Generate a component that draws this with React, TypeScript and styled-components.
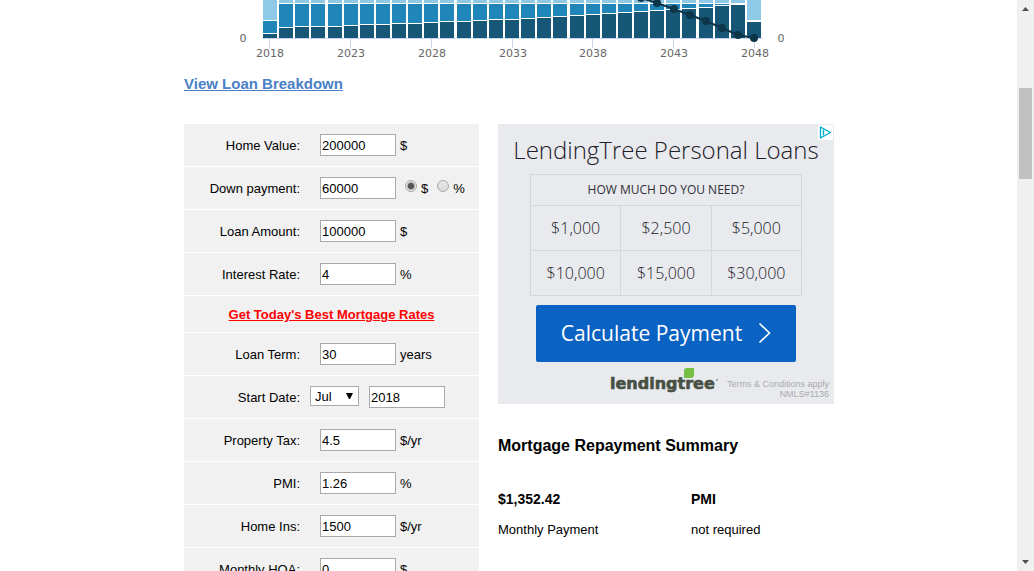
import React from "react";
import styled, { createGlobalStyle } from "styled-components";

const GlobalStyle = createGlobalStyle`
  *, *::before, *::after { box-sizing: border-box; }
  body {
    margin: 0;
    background: #fff;
    color: #000;
    font-family: "Liberation Sans", Arial, sans-serif;
    font-size: 13px;
  }
`;

const Window = styled.div`
  display: grid;
  grid-template-columns: minmax(0, 1fr) 17px;
  height: 100vh;
  overflow: hidden;
`;

const Viewport = styled.div`
  min-width: 0;
  padding-left: 1px;
  overflow: hidden;
`;

const Content = styled.main`
  max-width: 650px;
  margin: 0 auto;
`;

const Chart = styled.svg`
  display: block;
  width: 100%;
  height: 64px;
  overflow: hidden;
  font-family: "DejaVu Sans", Verdana, sans-serif;
  font-size: 11px;
  fill: #666;
`;

const BreakdownLink = styled.a`
  display: block;
  width: fit-content;
  margin: 10px 0 30px;
  color: #4a80c6;
  font-size: 15px;
  font-weight: bold;
  line-height: 20px;
`;

const Columns = styled.div`
  display: grid;
  grid-template-columns: 295px minmax(0, 336px);
  justify-content: space-between;
  align-items: start;
`;

const LoanForm = styled.form`
  display: flex;
  flex-direction: column;
  gap: 1px;
`;

const Row = styled.div`
  display: flex;
  align-items: center;
  height: 42px;
  background: #f1f1f1;
`;

const RowLabel = styled.label<{ $gap?: number }>`
  width: 116px;
  margin-right: ${(p) => p.$gap ?? 20}px;
  padding-top: 2px;
  text-align: right;
  line-height: 20px;
`;

const TextBox = styled.input`
  width: 76px;
  height: 22px;
  padding: 1px;
  border: 1px solid #a9a9a9;
  border-radius: 0;
  background: #fff;
  color: #000;
  font: inherit;
`;

const Unit = styled.span`
  margin-left: 4px;
  padding-top: 2px;
  line-height: 20px;
`;

const RadioLabel = styled.label`
  display: flex;
  align-items: center;
  gap: 4px;
  margin-left: 9px;
  padding-top: 2px;
  line-height: 20px;
`;

const Radio = styled.input`
  appearance: none;
  width: 12px;
  height: 12px;
  margin: 0 0 6px;
  border: 1px solid #a8a8a8;
  border-radius: 50%;
  background: linear-gradient(#e6e6e6, #dcdcdc);
  &:checked {
    background: radial-gradient(circle, #555 0 2px, #666 3px, #e2e2e2 4px);
  }
`;

const SelectWrap = styled.span`
  display: grid;
  align-items: center;
  width: 49px;
  height: 20px;
  margin: 0 10px 2px 0;
`;

const MonthSelect = styled.select`
  grid-area: 1 / 1;
  appearance: none;
  width: 100%;
  height: 20px;
  padding: 0 4px;
  border: 1px solid #a9a9a9;
  border-radius: 0;
  background: #fff;
  color: #000;
  font: inherit;
`;

const SelectArrow = styled.svg`
  grid-area: 1 / 1;
  justify-self: end;
  margin-right: 6px;
  pointer-events: none;
`;

const RatesRow = styled(Row)`
  justify-content: center;
  height: 36px;
`;

const RatesLink = styled.a`
  padding-top: 2px;
  color: #f00;
  font-weight: bold;
  line-height: 20px;
`;

const Ad = styled.aside`
  position: relative;
  display: flex;
  flex-direction: column;
  align-items: center;
  height: 280px;
  padding-top: 9px;
  background: #e9eaee;
  color: #303038;
  font-family: "Open Sans", sans-serif;
`;

const AdChoices = styled.a`
  position: absolute;
  top: 1px;
  right: 1px;
  width: 15px;
  height: 15px;
  background: #fff;
  svg { display: block; }
`;

const AdTitle = styled.h2`
  margin: 0 0 7px;
  color: #202028;
  font-size: 24px;
  font-weight: 300;
  line-height: 34px;
  white-space: nowrap;
`;

const AmountGrid = styled.div`
  display: grid;
  grid-template-columns: repeat(3, 1fr);
  gap: 1px;
  width: 272px;
  padding: 1px;
  background: #d5d7db;
`;

const AmountHead = styled.div`
  grid-column: 1 / -1;
  background: #e9eaee;
  font-size: 12px;
  line-height: 30px;
  text-align: center;
`;

const Amount = styled.button`
  height: 44px;
  padding: 0;
  border: 0;
  background: #e9eaee;
  color: #202028;
  font: 300 16px "Open Sans", sans-serif;
`;

const Calculate = styled.button`
  display: flex;
  align-items: center;
  justify-content: center;
  gap: 16px;
  width: 260px;
  height: 57px;
  margin-top: 9px;
  padding: 0 0 2px;
  border: 0;
  border-radius: 2px;
  background: #0a62c2;
  color: #fff;
  font: 400 21px "Open Sans", sans-serif;
`;

const AdFooter = styled.div`
  display: flex;
  align-self: stretch;
  justify-content: flex-end;
  gap: 6px;
  padding: 5px 5px 0 0;
`;

const Terms = styled.p`
  margin: 12px 0 0;
  color: #aaabae;
  font: 9px/10px "Liberation Sans", Arial, sans-serif;
  text-align: right;
`;

const SummaryTitle = styled.h3`
  margin: 32px 0 33px;
  font-size: 16px;
  line-height: 20px;
`;

const Summary = styled.dl`
  display: grid;
  grid-template-columns: 193px 1fr;
  margin: 0;
`;

const SummaryItem = styled.div`
  display: flex;
  flex-direction: column;
  gap: 11px;
`;

const SummaryValue = styled.dt`
  font-size: 14px;
  font-weight: bold;
  line-height: 20px;
`;

const SummaryLabel = styled.dd`
  margin: 0;
  line-height: 20px;
`;

const Scrollbar = styled.div`
  display: flex;
  flex-direction: column;
  align-items: center;
  background: #f0f0f0;
`;

const ScrollArrow = styled.svg`
  flex: none;
  display: block;
`;

const ScrollTrack = styled.div`
  flex: 1;
  padding-top: 71px;
`;

const ScrollThumb = styled.div`
  width: 13px;
  height: 91px;
  background: #c1c1c1;
`;

const darkTops = [
  34, 28, 27, 27, 27, 26, 25, 25, 24, 24, 23, 22, 22, 21, 20, 20, 19, 18, 17,
  16, 15, 14, 13, 12, 11, 10, 9, 8, 6, 5, 22,
];
const balance = [
  [641, -2], [657, 3], [674, 9], [690, 15], [706, 21], [722, 28], [738, 35], [754, 38],
].map(([x, y]) => [x - 184, y]);

function BalanceChart() {
  const last = darkTops.length - 1;
  return (
    <Chart viewBox="0 0 650 64" role="img" aria-label="Mortgage balance by year">
      <g shapeRendering="crispEdges">
        {darkTops.map((top, i) => {
          const x = 79 + Math.round((i * 484) / 30);
          const lightEnd = i === 0 || i === last ? 20 : 3;
          return (
            <g key={i}>
              <rect x={x} y={0} width={14} height={lightEnd} fill="#8fc9e8" />
              {top - lightEnd > 2 && (
                <rect x={x} y={lightEnd + 1} width={14} height={top - lightEnd - 2} fill="#2085b8" />
              )}
              <rect x={x} y={top} width={14} height={38 - top} fill="#165777" />
            </g>
          );
        })}
        <rect x={78} y={38} width={501} height={1} fill="#ccd6eb" />
        {[85, 166, 247, 328, 408, 489, 570].map((x) => (
          <rect key={x} x={x} y={39} width={1} height={9} fill="#ccd6eb" />
        ))}
      </g>
      <polyline points={balance.map((p) => p.join(",")).join(" ")} fill="none" stroke="#0d3548" strokeWidth={2} />
      {balance.map(([x, y]) => (
        <circle key={x} cx={x} cy={y} r={4} fill="#0d3548" />
      ))}
      <text x={59} y={42} textAnchor="middle">0</text>
      <text x={597} y={42} textAnchor="middle">0</text>
      {[2018, 2023, 2028, 2033, 2038, 2043, 2048].map((year, i) => (
        <text key={year} x={86 + Math.round((i * 485) / 6)} y={57} textAnchor="middle">
          {year}
        </text>
      ))}
    </Chart>
  );
}

function Field({ id, label, value, unit }: { id: string; label: string; value: string; unit: string }) {
  return (
    <Row>
      <RowLabel htmlFor={id}>{label}</RowLabel>
      <TextBox id={id} defaultValue={value} />
      <Unit>{unit}</Unit>
    </Row>
  );
}

function LendingTreeAd() {
  return (
    <Ad>
      <AdChoices href="#" aria-label="AdChoices">
        <svg width="15" height="15" viewBox="0 0 15 15" fill="none" stroke="#00aecd" strokeWidth="1.4">
          <path d="M2.5 2 L12.5 7.5 L2.5 13 Z" strokeLinejoin="round" />
          <path d="M5.5 4.5 V10.5" />
        </svg>
      </AdChoices>
      <AdTitle>LendingTree Personal Loans</AdTitle>
      <AmountGrid>
        <AmountHead>HOW MUCH DO YOU NEED?</AmountHead>
        {["$1,000", "$2,500", "$5,000", "$10,000", "$15,000", "$30,000"].map((a) => (
          <Amount key={a} type="button">{a}</Amount>
        ))}
      </AmountGrid>
      <Calculate type="button">
        Calculate Payment
        <svg width="13" height="22" viewBox="0 0 13 22" fill="none" stroke="#fff" strokeWidth="1.6">
          <path d="M1.5 1.5 L11.5 11 L1.5 20.5" />
        </svg>
      </Calculate>
      <AdFooter>
        <svg width="112" height="30" viewBox="0 0 112 30" role="img" aria-label="lendingtree">
          <text
            x="1"
            y="22"
            fill="#475043"
            stroke="#475043"
            strokeWidth="0.6"
            fontFamily="DejaVu Sans, sans-serif"
            fontWeight="bold"
            fontSize="16"
          >
            lendingtree
          </text>
          <path d="M75 11 V4 Q75 1 78 1 H85 V8 Q85 11 82 11 Z" fill="#77bf43" />
          <circle cx="108" cy="13" r="1" fill="#8a8f88" />
        </svg>
        <Terms>
          Terms &amp; Conditions apply
          <br />
          NMLS#1136
        </Terms>
      </AdFooter>
    </Ad>
  );
}

export default function App() {
  return (
    <Window>
      <GlobalStyle />
      <Viewport>
        <Content>
          <BalanceChart />
          <BreakdownLink href="#">View Loan Breakdown</BreakdownLink>
          <Columns>
            <LoanForm>
              <Field id="home-value" label="Home Value:" value="200000" unit="$" />
              <Row>
                <RowLabel htmlFor="down-payment">Down payment:</RowLabel>
                <TextBox id="down-payment" defaultValue="60000" />
                <RadioLabel>
                  <Radio type="radio" name="down-unit" defaultChecked />$
                </RadioLabel>
                <RadioLabel>
                  <Radio type="radio" name="down-unit" />%
                </RadioLabel>
              </Row>
              <Field id="loan-amount" label="Loan Amount:" value="100000" unit="$" />
              <Field id="interest" label="Interest Rate:" value="4" unit="%" />
              <RatesRow>
                <RatesLink href="#">Get Today's Best Mortgage Rates</RatesLink>
              </RatesRow>
              <Field id="term" label="Loan Term:" value="30" unit="years" />
              <Row>
                <RowLabel htmlFor="start-month" $gap={10}>Start Date:</RowLabel>
                <SelectWrap>
                  <MonthSelect id="start-month" defaultValue="Jul">
                    <option>Jul</option>
                    <option>Aug</option>
                  </MonthSelect>
                  <SelectArrow width="7" height="7" viewBox="0 0 7 7">
                    <path d="M0 0 H7 L4 6 H3 Z" />
                  </SelectArrow>
                </SelectWrap>
                <TextBox aria-label="Start year" defaultValue="2018" />
              </Row>
              <Field id="tax" label="Property Tax:" value="4.5" unit="$/yr" />
              <Field id="pmi" label="PMI:" value="1.26" unit="%" />
              <Field id="insurance" label="Home Ins:" value="1500" unit="$/yr" />
              <Field id="hoa" label="Monthly HOA:" value="0" unit="$" />
            </LoanForm>
            <div>
              <LendingTreeAd />
              <SummaryTitle>Mortgage Repayment Summary</SummaryTitle>
              <Summary>
                <SummaryItem>
                  <SummaryValue>$1,352.42</SummaryValue>
                  <SummaryLabel>Monthly Payment</SummaryLabel>
                </SummaryItem>
                <SummaryItem>
                  <SummaryValue>PMI</SummaryValue>
                  <SummaryLabel>not required</SummaryLabel>
                </SummaryItem>
              </Summary>
            </div>
          </Columns>
        </Content>
      </Viewport>
      <Scrollbar aria-hidden="true">
        <ScrollArrow width="17" height="17" viewBox="0 0 17 17">
          <path d="M5 11 L8.5 7 L12 11 Z" fill="#505050" />
        </ScrollArrow>
        <ScrollTrack>
          <ScrollThumb />
        </ScrollTrack>
        <ScrollArrow width="17" height="17" viewBox="0 0 17 17">
          <path d="M5 6 L8.5 10 L12 6 Z" fill="#505050" />
        </ScrollArrow>
      </Scrollbar>
    </Window>
  );
}
